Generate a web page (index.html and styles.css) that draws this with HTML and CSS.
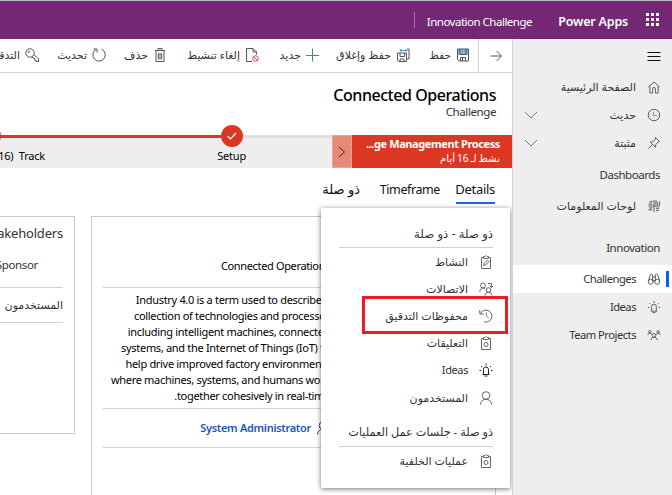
FILE: index.html
```html
<!DOCTYPE html>
<html lang="ar" dir="rtl">
<head>
<meta charset="utf-8">
<title>Innovation Challenge - Power Apps</title>
<link rel="stylesheet" href="styles.css">
</head>
<body>
<svg class="defs" width="0" height="0">
  <symbol id="clip" viewBox="0 0 14 14"><path d="M4.500 2.500h-2v11h9v-11h-2M4.500 3.500v-2h1.500l1-1 1 1h1.500v2z"/></symbol>
  <symbol id="bulb" viewBox="0 0 14 14"><path d="M4.500 11V6.500a2.500 2.500 0 0 1 5 0V11M3.500 11.500h7M5.500 13h3M7 .5v2M2 3l1 1M12 3l-1 1M.5 7.500H2M12 7.500h1.500"/></symbol>
  <symbol id="person" viewBox="0 0 14 14"><circle cx="7" cy="4.500" r="3.800"/><path d="M1.500 13.500c0-3 2-5.200 5.500-5.200s5.500 2.200 5.500 5.200"/></symbol>
</svg>
<div class="app">
  <header class="topbar">
    <svg class="waffle" viewBox="0 0 13 13"><path d="M0 0h3v3H0zM5 0h3v3H5zM10 0h3v3h-3zM0 5h3v3H0zM5 5h3v3H5zM10 5h3v3h-3zM0 10h3v3H0zM5 10h3v3H5zM10 10h3v3h-3z"/></svg>
    <span class="brand">Power Apps</span>
    <span class="appname">Innovation Challenge</span>
    <span class="divider"></span>
  </header>
  <div class="body">
    <nav class="side">
      <div class="burger"><svg viewBox="0 0 14 14"><path d="M.5 3.500h13M.5 7.500h13M.5 11.500h13"/></svg></div>
      <div class="nav"><svg class="ic" viewBox="0 0 14 14"><path d="M1 7l6-5.500L13 7M2.500 6v7.500h3V9a1.500 1.500 0 0 1 3 0v4.500h3V6"/></svg><span class="home">الصفحة الرئيسية</span></div>
      <div class="nav"><svg class="ic" viewBox="0 0 14 14"><circle cx="7" cy="7" r="6.200"/><path class="blue" d="M6.500 3.500v4H10"/></svg><span>حديث</span><svg class="chev" viewBox="0 0 14 8"><path d="M1 1l6 6 6-6"/></svg></div>
      <div class="nav"><svg class="ic" viewBox="0 0 14 14"><path d="M8.500 1l4.500 4.500-1.500.5-2.500 2.500-.5 3L3 6l3-.5L8.500 3zM5.500 8.500l-4.500 4.500"/></svg><span>مثبتة</span><svg class="chev" viewBox="0 0 14 8"><path d="M1 1l6 6 6-6"/></svg></div>
      <div class="group first">Dashboards</div>
      <div class="nav boards"><svg class="ic" viewBox="0 0 14 14"><path d="M7 .5v13M1 7h12.500M2 2.500h3.500M1 5h4M9 1v5M11 3v3M13 2v4M2 9h3M1 11h4M9 9.500h3.500M9 12h3"/><path class="blue" d="M4 1v5M3 8.500v4M10 1v4M11 8v4"/></svg><span>لوحات المعلومات</span></div>
      <div class="group second">Innovation</div>
      <div class="nav latin active"><svg class="ic" viewBox="0 0 14 14"><circle cx="3.500" cy="10" r="2.700"/><circle cx="10.500" cy="10" r="2.700"/><path d="M1 9l2-6.500 1-1 1.500 1v7M13 9l-2-6.500-1-1-1.500 1v7M5.500 5h3M5.500 8.500h3"/></svg><span>Challenges</span></div>
      <div class="nav latin"><svg class="ic"><use href="#bulb"/></svg><span>Ideas</span></div>
      <div class="nav latin"><svg class="ic" viewBox="0 0 14 14"><circle cx="7" cy="7.500" r="2"/><circle cx="2.500" cy="3.500" r="1.300"/><circle cx="11.500" cy="3.500" r="1.300"/><path d="M3.500 12.500c.3-2 1.500-3 3.500-3s3.200 1 3.500 3M.5 7c0-1.500 1-2 2-2s2 1 2.500 1.500M13.500 7c0-1.500-1-2-2-2s-2 1-2.500 1.500"/></svg><span>Team Projects</span></div>
    </nav>
    <main class="main">
      <div class="toolbar">
        <div class="fwd"><svg viewBox="0 0 14 14"><path d="M1.500 7h11M7.500 2l5 5-5 5"/></svg></div>
        <div class="cmd save"><svg viewBox="0 0 14 14"><path class="fillblue" d="M2 1h10v6H2z"/><path d="M1.500 1h11v12H3l-1.500-1.500zM4 1v5.500h6V1M4.500 13V9.500h5V13M6.500 10v3"/></svg><span>حفظ</span></div>
        <div class="cmd close"><svg viewBox="0 0 14 14"><path d="M1.500 5h9v8.500h-8l-1-1zM4 5v3.500h4.500V5M4 13.500V11h4v2.500M11 11h2V1h-2"/><path class="blue" d="M4 2.500h7M5.500 1L4 2.500 5.500 4M9.500 1L11 2.500 9.500 4"/></svg><span>حفظ وإغلاق</span></div>
        <div class="cmd new"><svg class="green" viewBox="0 0 14 14"><path d="M6.500 .5v13M0 7.500h13"/></svg><span>جديد</span></div>
        <div class="cmd off"><svg viewBox="0 0 14 14"><path d="M7 13.500H1.500V.5H8l3.500 3.500v2.500M8 .5V4h3.500"/><g class="red"><circle cx="10.500" cy="10.500" r="2.800"/><path d="M8.500 8.500l4 4"/></g></svg><span>إلغاء تنشيط</span></div>
        <div class="cmd del"><svg viewBox="0 0 14 14"><path d="M2 2.500h10M5 2.500v-2h4v2M3 2.500v11h8v-11M5.300 5v6.500M7 5v6.500M8.700 5v6.500"/></svg><span>حذف</span></div>
        <div class="cmd ref"><svg viewBox="0 0 14 14"><path d="M9.500 1.200A6.200 6.200 0 1 1 4 1.500M1.500 1H5v3.500"/></svg><span>تحديث</span></div>
        <div class="cmd key"><svg viewBox="0 0 14 14"><circle cx="5" cy="5" r="4.200"/><circle cx="3.800" cy="3.800" r=".6"/><path d="M9 6.500l4.500 4.500v2.500H11V12H9.500v-1.500L6.500 9"/></svg><span>التدقيق</span></div>
      </div>
      <div class="title"><h1>Connected Operations</h1><p>Challenge</p></div>
      <div class="process">
        <div class="procname"><b dir="ltr">...ge Management Process</b><span>نشط لـ 16 أيام</span></div>
        <div class="procnext"><svg viewBox="0 0 8 12"><path d="M1 1l5.500 5L1 11"/></svg></div>
        <div class="track">
          <div class="rail"><i class="todo"></i><i class="done"></i></div>
          <div class="stages"><span class="setup">Setup</span><span class="trk" dir="ltr">(16)&nbsp; Track</span></div>
          <svg class="dot" viewBox="0 0 22 22"><circle cx="11" cy="11" r="11"/><path d="M6.500 11l3 3 5.500-6"/></svg>
          <i class="dot2"></i>
        </div>
      </div>
      <div class="tabs"><span class="tab details on">Details</span><span class="tab time">Timeframe</span><span class="tab rel">ذو صلة</span></div>
      <div class="cards">
        <section class="card summary">
          <h3>Connected Operations</h3>
          <div class="desc">Industry 4.0 is a term used to describe a<br>collection of technologies and processes<br>including intelligent machines, connected<br>systems, and the Internet of Things (IoT) to<br>help drive improved factory environments<br>where machines, systems, and humans work<br>together cohesively in real-time.</div>
          <div class="owner"><svg><use href="#person"/></svg><span>System Administrator</span></div>
        </section>
        <section class="card stake">
          <h2>Stakeholders</h2>
          <p>Sponsor</p>
          <div class="users">المستخدمون</div>
        </section>
      </div>
      <div class="menu">
        <h4 class="h1">ذو صلة - ذو صلة</h4>
        <div class="mi"><svg><use href="#clip"/><path d="M4.500 10.500l.5-2L8.500 5 10 6.500 6.500 10z"/></svg><span>النشاط</span></div>
        <div class="mi"><svg viewBox="0 0 14 14"><circle cx="4" cy="3.500" r="2.500"/><circle cx="9.500" cy="8" r="2.300"/><path d="M.8 10c0-2.500 1.200-4 3.200-4 1 0 2 .5 2.500 1.200M6 13.500c0-2 1.300-3.200 3.500-3.200s3.500 1.200 3.500 3.200M9 1.500h3.500V5M11 4l1.500 1.500L14 4"/></svg><span>الاتصالات</span></div>
        <div class="mi"><svg viewBox="0 0 14 14"><path d="M1.500 4.500A6 6 0 1 1 5 12.800M.8 1v4h4"/><path class="blue" d="M7.500 3.500V7L10 9.500"/></svg><span>محفوظات التدقيق</span></div>
        <div class="mi"><svg><use href="#clip"/><circle cx="7" cy="8.500" r="2"/></svg><span>التعليقات</span></div>
        <div class="mi dark"><svg><use href="#bulb"/></svg><span class="ideas">Ideas</span></div>
        <div class="mi"><svg><use href="#person"/></svg><span>المستخدمون</span></div>
        <h4 class="h2">ذو صلة - جلسات عمل العمليات</h4>
        <div class="mi"><svg><use href="#clip"/><circle cx="7" cy="8.500" r="2"/></svg><span>عمليات الخلفية</span></div>
        <div class="mark"></div>
      </div>
    </main>
  </div>
</div>
</body>
</html>
```
FILE: styles.css
```css
* { box-sizing: border-box; }
body { margin: 0; background: #fff; color: #333; font: 12px/16px "Noto Sans", "DejaVu Sans", sans-serif; overflow: hidden; }
h1, h2, h3, h4, p { margin: 0; font-weight: 400; }
svg { flex: none; width: 14px; height: 14px; fill: none; stroke: #555; stroke-width: 1; overflow: visible; }
span { white-space: nowrap; }
.defs { position: absolute; width: 0; height: 0; }
.blue { stroke: #4a9bd1; }
.fillblue { fill: #7cb5dc; stroke: none; }
.green { stroke: #2c9b58; }
.red { stroke: #e0444b; }
.app { width: 672px; height: 495px; overflow: hidden; }
.topbar { height: 39px; border-top: 1px solid #b9b9b9; background: #742774; color: #fff; display: flex; align-items: center; padding: 0 13px 1px 0; }
.waffle { width: 13px; height: 13px; fill: #fff; stroke: none; }
.brand { margin: 4px 18px 0 0; width: 70px; font-size: 12.500px; font-weight: 600; letter-spacing: -.2px; }
.appname { margin: 4px 26px 0 0; width: 105px; font-size: 11.500px; letter-spacing: -.5px; }
.divider { width: 1px; height: 16px; margin: 0 12px 0 0; background: #a877a8; }
.body { display: flex; height: 456px; }
.side { width: 160px; flex: none; background: #eee; border-left: 1px solid #d4d4d4; }
.burger { height: 34px; padding: 10px 11px 0 0; }
.burger svg { stroke: #111; stroke-width: 1.200; }
.nav { height: 28px; display: flex; align-items: center; padding-right: 11px; font-size: 11px; }
.nav span { margin-right: 11px; }
.nav.latin span { font-size: 11.200px; letter-spacing: -.5px; }
.ic { width: 14px; height: 14px; transform: scale(.93); }
.chev { width: 14px; height: 8px; margin: 0 auto 0 11px; stroke: #777; }
.group { padding-right: 12px; font-size: 11.500px; letter-spacing: -.45px; height: 35px; line-height: 36px; }
.boards { height: 28px; }
.second { height: 45px; line-height: 56px; }
.active { background: #fff; position: relative; }
.active::after { content: ""; position: absolute; right: 3px; top: 6px; width: 3px; height: 16px; background: #0b5cff; }
.main { width: 512px; flex: none; position: relative; overflow: hidden; }
.toolbar { display: flex; height: 34px; border-bottom: 1px solid #d4d4d4; }
.fwd { width: 34px; flex: none; border-left: 1px solid #d4d4d4; display: grid; place-items: center; margin-left: 8px; }
.cmd { display: flex; align-items: center; flex: none; font-size: 11px; padding-bottom: 1px; }
.cmd span { margin-right: 5px; }
.save { width: 60px; } .close { width: 90px; } .new { width: 61px; } .off { width: 92px; } .del { width: 61px; } .ref { width: 67px; } .key { width: 80px; }
.save span { font-size: 10.500px; }
.title { height: 62px; padding: 12px 16px 0 0; }
.title h1 { font-size: 16px; line-height: 20px; font-weight: 500; color: #000; letter-spacing: -.45px; }
.title p { font-size: 11.500px; line-height: 14px; letter-spacing: -.4px; }
.process { height: 33px; display: flex; }
.procname { width: 160px; background: #dc3723; color: #fff; padding: 2px 12px 0 0; }
.procname b { display: block; font-size: 11px; line-height: 14px; letter-spacing: -.4px; white-space: nowrap; font-weight: 700; text-align: right; }
.procname span { display: block; font-size: 10.200px; line-height: 14px; word-spacing: -.8px; }
.procnext { width: 20px; background: #e98778; border: 1px solid #f0a297; display: grid; place-items: center; }
.procnext svg { width: 8px; height: 12px; stroke: #333; }
.track { width: 332px; background: #eee; position: relative; }
.rail { display: flex; height: 3px; }
.todo { width: 100px; background: #dfdfdf; }
.done { width: 232px; background: #dc3723; }
.stages { display: flex; padding-top: 10px; color: #000; font-size: 11px; letter-spacing: -.2px; }
.setup { margin-right: 86px; width: 28px; }
.trk { margin-right: 173px; }
.dot { position: absolute; left: 221px; top: -10px; width: 22px; height: 22px; fill: #dc3723; stroke: none; }
.dot path { fill: none; stroke: #fff; stroke-width: 1.200; }
.dot2 { position: absolute; left: -21px; top: -10px; width: 22px; height: 22px; border-radius: 50%; background: #dc3723; }
.tabs { height: 48px; display: flex; padding: 11px 17px 0 0; align-items: flex-start; color: #111; font-size: 13px; line-height: 20px; }
.tab { height: 25px; }
.on { border-bottom: 2px solid #2266e3; }
.details { width: 39px; letter-spacing: -.3px; } .time { width: 61px; margin-right: 16px; font-size: 12.500px; letter-spacing: -.4px; line-height: 21px; } .rel { margin-right: 19px; }
.cards { display: flex; padding-right: 16px; align-items: flex-start; }
.card { border: 1px solid #c8c8c8; flex: none; }
.summary { width: 405px; height: 300px; padding: 0 11px; }
.summary h3 { height: 71px; border-bottom: 1px solid #d0d0d0; padding: 41px 154px 0 0; font-size: 11px; color: #000; letter-spacing: -.35px; }
.desc { color: #000; font-size: 11px; line-height: 16px; padding: 4px 154px 0 0; height: 120px; letter-spacing: -.31px; white-space: nowrap; }
.owner { border: solid #d0d0d0; border-width: 1px 0; height: 40px; display: flex; align-items: center; padding-right: 154px; color: #1d55b3; font-weight: 600; font-size: 11px; letter-spacing: -.3px; }
.owner svg { stroke: #1d55b3; margin-left: 5px; }
.stake { width: 200px; height: 218px; margin-right: 16px; padding: 8px 11px 0; color: #333; }
.stake h2 { font-size: 13px; letter-spacing: -.2px; }
.stake p { padding: 16px 25px 0 0; height: 46px; font-size: 11.500px; letter-spacing: -.35px; }
.users { border: solid #d0d0d0; border-width: 1px 0; height: 36px; line-height: 34px; font-size: 11px; }
.menu { position: absolute; left: 321px; top: 169px; width: 189px; height: 280px; background: #fff; box-shadow: 0 1px 5px rgba(0,0,0,.55); padding: 12px 17px 0 18px; }
.menu h4 { height: 28px; line-height: 26px; border-bottom: 1px solid #d0d0d0; white-space: nowrap; }
.h1 { font-size: 11.700px; word-spacing: .3px; }
.menu h4.h2 { font-size: 11.300px; margin-top: 8px; }
.mi { height: 27.200px; display: flex; align-items: center; font-size: 11px; }
.mi svg { width: 14px; height: 14px; stroke: #666; }
.mi .blue { stroke: #4a9bd1; }
.mi span { margin-right: 11px; }
.mi .ideas { letter-spacing: -.4px; }
.dark svg { stroke: #222; }
.mark { position: absolute; left: 41px; top: 88px; width: 146px; height: 38px; border: 3px solid #ed1c24; }
```
